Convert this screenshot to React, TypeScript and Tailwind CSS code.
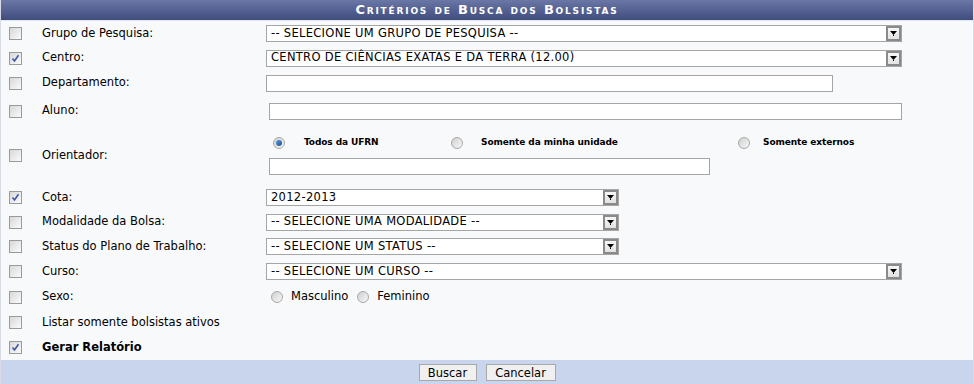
import React from 'react';

const Check = ({ checked }: { checked?: boolean }) => (
  <span className="w-[13px] h-[13px] border border-[#9a9a9a] bg-gradient-to-br from-[#d8d8d8] to-[#fbfbfb] flex items-center justify-center">
    {checked && (
      <svg width="9" height="9" viewBox="0 0 9 9">
        <path d="M1.5 4.5 L3.5 7 L7.5 1.2" fill="none" stroke="#3f55a6" strokeWidth="1.6" />
      </svg>
    )}
  </span>
);

const Radio = ({ checked }: { checked?: boolean }) => (
  <span className="w-[12px] h-[12px] rounded-full border border-[#a8a8a8] bg-gradient-to-br from-[#d0d0d0] to-[#f8f8f8] flex items-center justify-center shrink-0">
    {checked && <span className="w-[6px] h-[6px] rounded-full bg-gradient-to-br from-[#5b9bd8] to-[#1f4f91]" />}
  </span>
);

const Select = ({ text, w }: { text: string; w: string }) => (
  <div className={`${w} h-[17px] border border-[#a5a5a5] bg-white flex items-center`}>
    <span className="flex-1 pl-[4px] truncate tracking-[0.3px]">{text}</span>
    <span className="w-[15px] h-[15px] border-2 border-[#8a8a8a] bg-gradient-to-b from-[#f6f6f6] to-[#e2e2e2] flex items-center justify-center">
      <svg width="7" height="5" viewBox="0 0 7 5">
        <path d="M0 0 H7 L3.5 4 Z" fill="#000" />
        <rect x="3" y="4" width="1" height="1" fill="#000" />
      </svg>
    </span>
  </div>
);

const Input = ({ w }: { w: string }) => <div className={`${w} h-[17px] border border-[#a5a5a5] bg-white`} />;

const Row = ({
  h,
  checked,
  label,
  bold,
  children,
}: {
  h: string;
  checked?: boolean;
  label: string;
  bold?: boolean;
  children?: React.ReactNode;
}) => (
  <div className={`${h} flex items-center`}>
    <div className="w-[41px] pl-[8px] flex items-center">
      <Check checked={checked} />
    </div>
    <div className={`w-[224px] ${bold ? 'font-bold' : ''}`}>{label}</div>
    <div className="flex-1">{children}</div>
  </div>
);

export default function App() {
  return (
    <div className="w-[974px] h-[384px] bg-[#f8f9fb] border-x border-[#d8dbe3] text-[11.5px] text-black" style={{ fontFamily: '"DejaVu Sans", Verdana, sans-serif' }}>
      <div className="h-[21px] bg-gradient-to-b from-[#6b78a6] to-[#3f4c7e] border-b border-[#e6e8ef] flex items-center justify-center text-white font-bold tracking-[1.8px] [font-variant:small-caps] text-[13px]">
        Critérios de Busca dos Bolsistas
      </div>
      <Row h="h-[25px]" label="Grupo de Pesquisa:">
        <Select w="w-[636px]" text="-- SELECIONE UM GRUPO DE PESQUISA --" />
      </Row>
      <Row h="h-[24px]" checked label="Centro:">
        <Select w="w-[636px]" text="CENTRO DE CIÊNCIAS EXATAS E DA TERRA (12.00)" />
      </Row>
      <Row h="h-[26px]" label="Departamento:">
        <Input w="w-[567px]" />
      </Row>
      <Row h="h-[30px]" label="Aluno:">
        <div className="pl-[3px]">
          <Input w="w-[633px]" />
        </div>
      </Row>
      <Row h="h-[59px]" label="Orientador:">
        <div className="flex flex-col gap-[9px]">
          <div className="grid grid-cols-[178px_287px_1fr] text-[9px] font-bold tracking-[-0.1px]">
            <div className="flex items-center pl-[7px] gap-[19px]">
              <Radio checked />
              <span>Todos da UFRN</span>
            </div>
            <div className="flex items-center pl-[7px] gap-[18px]">
              <Radio />
              <span>Somente da minha unidade</span>
            </div>
            <div className="flex items-center pl-[7px] gap-[13px]">
              <Radio />
              <span>Somente externos</span>
            </div>
          </div>
          <div className="pl-[3px]">
            <Input w="w-[441px]" />
          </div>
        </div>
      </Row>
      <Row h="h-[25px]" checked label="Cota:">
        <Select w="w-[353px]" text="2012-2013" />
      </Row>
      <Row h="h-[24px]" label="Modalidade da Bolsa:">
        <Select w="w-[353px]" text="-- SELECIONE UMA MODALIDADE --" />
      </Row>
      <Row h="h-[25px]" label="Status do Plano de Trabalho:">
        <Select w="w-[353px]" text="-- SELECIONE UM STATUS --" />
      </Row>
      <Row h="h-[25px]" label="Curso:">
        <Select w="w-[636px]" text="-- SELECIONE UM CURSO --" />
      </Row>
      <Row h="h-[26px]" label="Sexo:">
        <div className="flex items-center pl-[5px]">
          <Radio />
          <span className="ml-[8px]">Masculino</span>
          <span className="ml-[9px]">
            <Radio />
          </span>
          <span className="ml-[8px]">Feminino</span>
        </div>
      </Row>
      <Row h="h-[25px]" label="Listar somente bolsistas ativos" />
      <Row h="h-[25px]" checked bold label="Gerar Relatório" />
      <div className="h-[24px] bg-[#c9d5ec] flex items-center justify-center gap-[9px]">
        <button className="h-[17px] w-[58px] border border-[#a8a8a8] bg-[#f0f0f0]">Buscar</button>
        <button className="h-[17px] w-[70px] border border-[#a8a8a8] bg-[#f0f0f0]">Cancelar</button>
      </div>
    </div>
  );
}
